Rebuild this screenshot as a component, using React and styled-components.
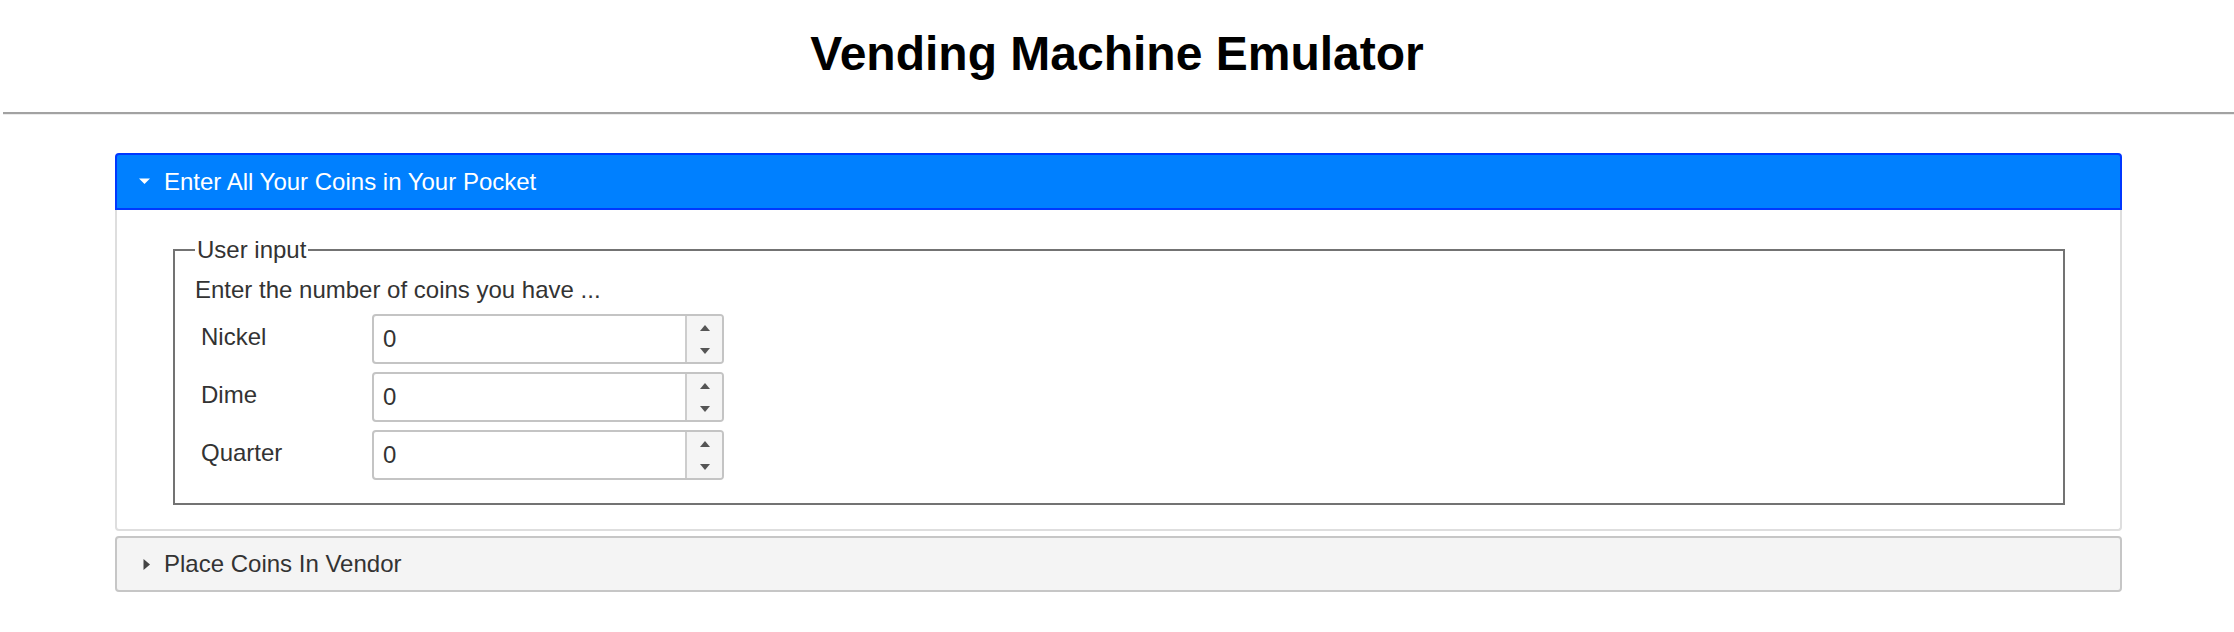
import React from "react";
import styled, { createGlobalStyle } from "styled-components";

const GlobalStyle = createGlobalStyle`
  html, body { margin: 0; padding: 0; background: #ffffff; }
  body {
    font-family: "Liberation Sans", Arial, Helvetica, sans-serif;
    font-size: 24px;
    color: #333333;
  }
  * { box-sizing: border-box; }
`;

const PageHeader = styled.header`
  padding: 26px 0 31px;
`;

const Title = styled.h1`
  margin: 0;
  font-size: 48px;
  line-height: 55px;
  font-weight: 700;
  color: #000000;
  text-align: center;
`;

const Rule = styled.hr`
  margin: 0 0 0 3px;
  height: 0;
  border: 0;
  border-top: 2px solid #a2a2a2;
  border-bottom: 1px solid #ececec;
`;

const Main = styled.main`
  padding: 38px 112px 40px 115px;
  display: flex;
  flex-direction: column;
  gap: 5px;
`;

const Panel = styled.section`
  display: flex;
  flex-direction: column;
`;

const PanelHeader = styled.div`
  display: flex;
  align-items: center;
  gap: 14px;
  height: ${(p) => (p.$open ? "57px" : "56px")};
  padding-left: 22px;
  border: 2px solid ${(p) => (p.$open ? "#0038ff" : "#c6c6c6")};
  border-radius: ${(p) => (p.$open ? "4px 4px 0 0" : "4px")};
  background: ${(p) => (p.$open ? "#0080ff" : "#f4f4f4")};
  color: ${(p) => (p.$open ? "#ffffff" : "#333333")};
  font-size: 24px;
  line-height: 28px;
  cursor: pointer;
`;

const Caret = styled.svg`
  display: block;
  width: 11px;
  height: 11px;
  flex: none;
`;

const PanelBody = styled.div`
  border: 2px solid #dedede;
  border-top: 0;
  border-radius: 0 0 4px 4px;
  padding: 26px 55px 24px 56px;
`;

const Fieldset = styled.fieldset`
  margin: 0;
  min-width: 0;
  border: 2px solid #737373;
  padding: 12px 20px 23px 20px;
`;

const Legend = styled.legend`
  padding: 0 2px;
  font-size: 24px;
  line-height: 28px;
  color: #333333;
`;

const Intro = styled.div`
  line-height: 28px;
`;

const CoinGrid = styled.div`
  display: grid;
  grid-template-columns: 177px 352px;
  row-gap: 8px;
  margin-top: 10px;
`;

const CoinLabel = styled.label`
  display: flex;
  align-items: center;
  padding: 0 0 5px 6px;
  line-height: 28px;
  color: #333333;
`;

const NumberBox = styled.div`
  display: flex;
  height: 50px;
  border: 2px solid #c4c4c4;
  border-radius: 4px;
  overflow: hidden;
  background: #ffffff;
`;

const NumberField = styled.input`
  flex: 1;
  min-width: 0;
  border: 0;
  outline: none;
  padding: 0 0 0 9px;
  font-family: inherit;
  font-size: 24px;
  color: #333333;
  background: transparent;
`;

const Spinner = styled.div`
  width: 37px;
  flex: none;
  display: flex;
  flex-direction: column;
  border-left: 2px solid #cdcdcd;
  background: #f5f5f5;
`;

const SpinButton = styled.button`
  flex: 1;
  display: flex;
  align-items: center;
  justify-content: center;
  border: 0;
  padding: 0;
  margin: 0;
  background: transparent;
  cursor: pointer;
`;

const SpinArrow = styled.svg`
  display: block;
  flex: none;
  width: 10px;
  height: 6px;
`;

function Stepper({ id }) {
  return (
    <NumberBox>
      <NumberField id={id} type="text" inputMode="numeric" defaultValue="0" />
      <Spinner>
        <SpinButton type="button" aria-label="increase">
          <SpinArrow viewBox="0 0 10 6">
            <path d="M0 6 L5 0 L10 6 Z" fill="#555555" />
          </SpinArrow>
        </SpinButton>
        <SpinButton type="button" aria-label="decrease">
          <SpinArrow viewBox="0 0 10 6">
            <path d="M0 0 L10 0 L5 6 Z" fill="#555555" />
          </SpinArrow>
        </SpinButton>
      </Spinner>
    </NumberBox>
  );
}

const coins = ["Nickel", "Dime", "Quarter"];

export default function App() {
  return (
    <>
      <GlobalStyle />
      <PageHeader>
        <Title>Vending Machine Emulator</Title>
      </PageHeader>
      <Rule />
      <Main>
        <Panel>
          <PanelHeader $open>
            <Caret viewBox="0 0 11 11">
              <path d="M0 2.5 L11 2.5 L5.5 8 Z" fill="#ffffff" />
            </Caret>
            <span>Enter All Your Coins in Your Pocket</span>
          </PanelHeader>
          <PanelBody>
            <Fieldset>
              <Legend>User input</Legend>
              <Intro>Enter the number of coins you have ...</Intro>
              <CoinGrid>
                {coins.map((c) => (
                  <React.Fragment key={c}>
                    <CoinLabel htmlFor={`coin-${c}`}>{c}</CoinLabel>
                    <Stepper id={`coin-${c}`} />
                  </React.Fragment>
                ))}
              </CoinGrid>
            </Fieldset>
          </PanelBody>
        </Panel>
        <Panel>
          <PanelHeader>
            <Caret viewBox="0 0 11 11">
              <path d="M4.5 0 L11 5.5 L4.5 11 Z" fill="#444444" />
            </Caret>
            <span>Place Coins In Vendor</span>
          </PanelHeader>
        </Panel>
      </Main>
    </>
  );
}
